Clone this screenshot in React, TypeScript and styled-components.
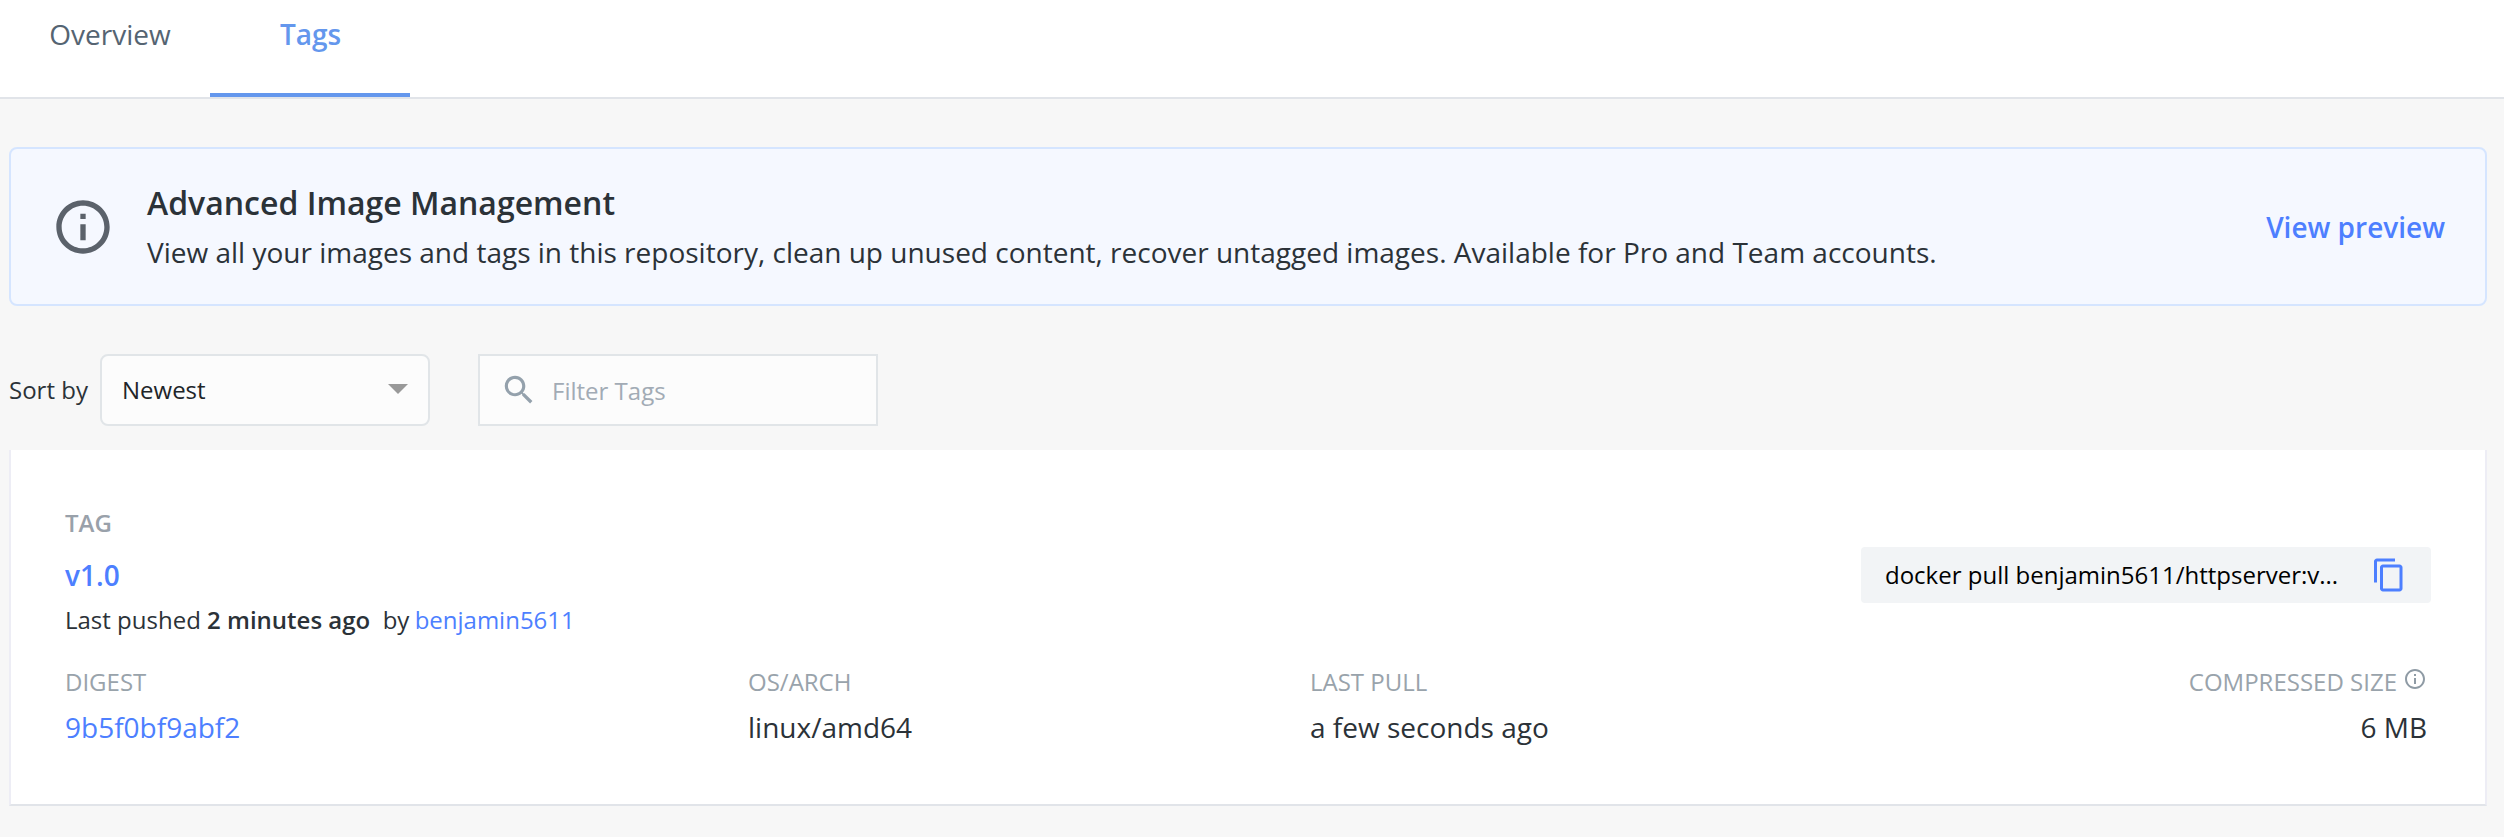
import React from "react";
import styled, { createGlobalStyle } from "styled-components";

const GlobalStyle = createGlobalStyle`
  *, *::before, *::after { box-sizing: border-box; }
  body {
    margin: 0;
    background: #f7f7f7;
    color: #2b3238;
    font-family: "Open Sans", sans-serif;
    font-size: 24px;
    line-height: 36px;
  }
`;

const Page = styled.div`
  min-height: 837px;
`;

const TabBar = styled.nav`
  display: flex;
  height: 99px;
  padding-left: 10px;
  background: #fff;
  border-bottom: 2px solid #e1e4e9;
`;

const Tab = styled.a<{ $active?: boolean }>`
  display: flex;
  justify-content: center;
  width: 200px;
  height: 97px;
  padding-top: 14px;
  padding-left: ${(p) => (p.$active ? "1px" : "0")};
  font-size: 28px;
  line-height: 40px;
  font-weight: ${(p) => (p.$active ? 600 : 400)};
  color: ${(p) => (p.$active ? "#6497ed" : "#556472")};
  border-bottom: 4px solid ${(p) => (p.$active ? "#6497ed" : "transparent")};
`;

const Content = styled.main`
  display: flex;
  flex-direction: column;
  padding: 48px 17px 0 9px;
`;

const Banner = styled.section`
  display: flex;
  align-items: center;
  height: 159px;
  padding: 0 40px;
  background: #f5f8ff;
  border: 2px solid #d5e5ff;
  border-radius: 8px;
`;

const BannerText = styled.div`
  flex: 1;
  margin-left: 32px;
`;

const BannerTitle = styled.h2`
  margin: 0;
  font-size: 32px;
  line-height: 51px;
  font-weight: 600;
`;

const BannerCopy = styled.p`
  margin: 0;
  font-size: 28px;
  line-height: 48px;
`;

const PreviewLink = styled.a`
  margin-top: 1px;
  font-size: 28px;
  line-height: 40px;
  font-weight: 600;
  color: #4d7fff;
`;

const Toolbar = styled.div`
  display: flex;
  align-items: center;
  height: 72px;
  margin: 48px 0 24px;
`;

const SortLabel = styled.label`
  width: 91px;
  white-space: nowrap;
`;

const Select = styled.div`
  display: flex;
  align-items: center;
  justify-content: space-between;
  width: 330px;
  height: 72px;
  padding: 0 6px 0 20px;
  background: #fcfcfc;
  border: 2px solid #e1e5e8;
  border-radius: 8px;
  color: #212529;

  svg { margin-bottom: 4px; }
`;

const FilterField = styled.div`
  display: flex;
  align-items: center;
  width: 400px;
  height: 72px;
  margin-left: 48px;
  padding-left: 20px;
  background: #fcfcfc;
  border: 2px solid #e1e5e8;
  color: #a2abb5;
`;

const Placeholder = styled.span`
  margin: 2px 0 0 14px;
`;

const Card = styled.article`
  height: 356px;
  padding: 55px 54px 0;
  background: #fff;
  border: 2px solid #ededf5;
  border-width: 0 2px 2px;
  border-bottom-color: #e1e4e9;
`;

const CardTop = styled.div`
  display: flex;
  justify-content: space-between;
`;

const TagHeading = styled.div`
  font-weight: 600;
  color: #99a1aa;
`;

const TagName = styled.a`
  display: block;
  margin-top: 14px;
  font-size: 28px;
  line-height: 40px;
  font-weight: 600;
  color: #4d7fff;
`;

const Pushed = styled.div`
  margin-top: 7px;
  white-space: pre;
  strong { font-weight: 600; }
`;

const Link = styled.a`
  margin-left: -1px;
  color: #4d7fff;
`;

const Command = styled.div`
  display: flex;
  align-items: center;
  justify-content: space-between;
  width: 570px;
  height: 56px;
  margin-top: 42px;
  padding: 0 24px;
  background: #f2f4f6;
  border-radius: 4px;
  color: #000;
`;

const Details = styled.div`
  display: grid;
  grid-template-columns: 683px 562px 1fr auto;
  margin-top: 26px;
  padding-right: 4px;
`;

const Detail = styled.div<{ $end?: boolean }>`
  display: flex;
  flex-direction: column;
  align-items: ${(p) => (p.$end ? "flex-end" : "flex-start")};
`;

const DetailLabel = styled.div`
  display: flex;
  gap: 6px;
  color: #99a3ab;

  svg { margin-top: 3px; }
`;

const DetailValue = styled.div<{ $link?: boolean }>`
  margin-top: 7px;
  font-size: 28px;
  line-height: 40px;
  color: ${(p) => (p.$link ? "#4d7fff" : "inherit")};
`;

const Glyph = styled.svg`
  display: block;
  flex: none;
`;

type IconProps = { size: number; color: string; d: string };

const Icon = ({ size, color, d }: IconProps) => (
  <Glyph width={size} height={size} viewBox="0 0 24 24" fill={color}>
    <path d={d} />
  </Glyph>
);

const INFO =
  "M11 7h2v2h-2zm0 4h2v6h-2zm1-9C6.48 2 2 6.48 2 12s4.48 10 10 10 10-4.48 10-10S17.52 2 12 2zm0 18c-4.41 0-8-3.59-8-8s3.59-8 8-8 8 3.59 8 8-3.59 8-8 8z";
const SEARCH =
  "M15.5 14h-.79l-.28-.27C15.41 12.59 16 11.11 16 9.5 16 5.91 13.09 3 9.5 3S3 5.91 3 9.5 5.91 16 9.5 16c1.61 0 3.09-.59 4.23-1.57l.27.28v.79l5 4.99L20.49 19l-4.99-5zm-6 0C7.01 14 5 11.99 5 9.5S7.01 5 9.5 5 14 7.01 14 9.5 11.99 14 9.5 14z";
const COPY =
  "M16 1H4c-1.1 0-2 .9-2 2v14h2V3h12V1zm3 4H8c-1.1 0-2 .9-2 2v14c0 1.1.9 2 2 2h11c1.1 0 2-.9 2-2V7c0-1.1-.9-2-2-2zm0 16H8V7h11v14z";
const CARET = "M7 10l5 5 5-5z";

export default function App() {
  return (
    <Page>
      <GlobalStyle />
      <TabBar>
        <Tab>Overview</Tab>
        <Tab $active>Tags</Tab>
      </TabBar>
      <Content>
        <Banner>
          <Icon size={64} color="#5b626b" d={INFO} />
          <BannerText>
            <BannerTitle>Advanced Image Management</BannerTitle>
            <BannerCopy>
              View all your images and tags in this repository, clean up unused content, recover
              untagged images. Available for Pro and Team accounts.
            </BannerCopy>
          </BannerText>
          <PreviewLink>View preview</PreviewLink>
        </Banner>
        <Toolbar>
          <SortLabel>Sort by</SortLabel>
          <Select>
            Newest
            <Icon size={48} color="#999999" d={CARET} />
          </Select>
          <FilterField>
            <Icon size={38} color="#94a1ac" d={SEARCH} />
            <Placeholder>Filter Tags</Placeholder>
          </FilterField>
        </Toolbar>
        <Card>
          <CardTop>
            <div>
              <TagHeading>TAG</TagHeading>
              <TagName>v1.0</TagName>
              <Pushed>
                {"Last pushed "}
                <strong>2 minutes ago</strong>
                {"  by "}
                <Link>benjamin5611</Link>
              </Pushed>
            </div>
            <Command>
              docker pull benjamin5611/httpserver:v...
              <Icon size={36} color="#4d7fff" d={COPY} />
            </Command>
          </CardTop>
          <Details>
            <Detail>
              <DetailLabel>DIGEST</DetailLabel>
              <DetailValue $link>9b5f0bf9abf2</DetailValue>
            </Detail>
            <Detail>
              <DetailLabel>OS/ARCH</DetailLabel>
              <DetailValue>linux/amd64</DetailValue>
            </Detail>
            <Detail>
              <DetailLabel>LAST PULL</DetailLabel>
              <DetailValue>a few seconds ago</DetailValue>
            </Detail>
            <Detail $end>
              <DetailLabel>
                COMPRESSED SIZE
                <Icon size={24} color="#8f9ba5" d={INFO} />
              </DetailLabel>
              <DetailValue>6 MB</DetailValue>
            </Detail>
          </Details>
        </Card>
      </Content>
    </Page>
  );
}
